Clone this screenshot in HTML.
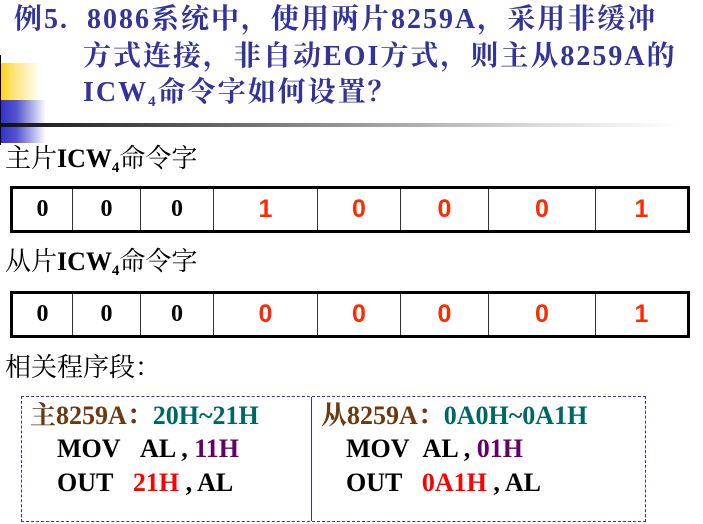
<!DOCTYPE html>
<html><head><meta charset="utf-8"><style>
body{margin:0;width:703px;height:524px;background:#fff;position:relative;overflow:hidden;font-family:"Liberation Serif","Noto Serif CJK SC",serif}
.a{position:absolute;white-space:nowrap}
.t{color:#333399;font-weight:bold;font-size:28px;line-height:30px;letter-spacing:2px}
.h{font-size:26px;color:#000;line-height:28px}
.h b{font-family:"Liberation Serif",serif}
table{position:absolute;left:10px;width:680px;border-collapse:collapse;border:3px solid #000;height:47px;table-layout:fixed}
td{border:1px solid #333;text-align:center;font-size:24px;font-weight:bold;padding:0}
td.r{color:#ff2a00;font-family:"Liberation Sans",sans-serif;font-size:25px}
.c{font-size:26px;font-weight:bold;line-height:28px}
sub{font-size:15px;vertical-align:-5px;line-height:0}
</style></head><body>
<div class="a" style="left:0;top:55px;width:1px;height:90px;background:#000"></div>
<div class="a" style="left:1px;top:63px;width:40px;height:37px;background:linear-gradient(90deg,#ffd21a,#ffe680 35%,#fff)"></div>
<div class="a" style="left:1px;top:100px;width:45px;height:43px;background:linear-gradient(90deg,#3333cc,#5555d0 35%,#fff)"></div>
<div class="a" style="left:0;top:123px;width:680px;height:4px;background:linear-gradient(90deg,#111,#888 45%,#ddd 80%,#fff)"></div>
<div class="a t" style="left:14px;top:5px">例5.&nbsp;&nbsp;8086系统中，使用两片8259A，采用非缓冲</div>
<div class="a t" style="left:83px;top:42px">方式连接，非自动EOI方式，则主从8259A的</div>
<div class="a t" style="left:83px;top:78px">ICW<sub>4</sub>命令字如何设置？</div>
<div class="a h" style="left:5px;top:145px">主片<b>ICW<sub>4</sub></b>命令字</div>
<table style="top:186px"><colgroup><col style="width:61px"><col style="width:68px"><col style="width:73px"><col style="width:104px"><col style="width:83px"><col style="width:88px"><col style="width:107px"><col></colgroup><tr>
<td>0</td><td>0</td><td>0</td><td class="r">1</td><td class="r">0</td><td class="r">0</td><td class="r">0</td><td class="r">1</td></tr></table>
<div class="a h" style="left:5px;top:248px">从片<b>ICW<sub>4</sub></b>命令字</div>
<table style="top:291px"><colgroup><col style="width:61px"><col style="width:68px"><col style="width:73px"><col style="width:104px"><col style="width:83px"><col style="width:88px"><col style="width:107px"><col></colgroup><tr>
<td>0</td><td>0</td><td>0</td><td class="r">0</td><td class="r">0</td><td class="r">0</td><td class="r">0</td><td class="r">1</td></tr></table>
<div class="a h" style="left:5px;top:354px">相关程序段：</div>
<div class="a" style="left:21px;top:396px;width:623px;height:124px;border:1px dashed #3333aa"></div>
<div class="a" style="left:311px;top:397px;width:1px;height:124px;background:#3333aa"></div>
<div class="a c" style="left:30px;top:402px"><span style="color:#6b3a10">主8259A：</span><span style="color:#006666">20H~21H</span></div>
<div class="a c" style="left:57px;top:435px">MOV&nbsp;&nbsp;&nbsp;AL , <span style="color:#660066">11H</span></div>
<div class="a c" style="left:57px;top:469px">OUT&nbsp;&nbsp;&nbsp;<span style="color:#ff0000">21H</span> , AL</div>
<div class="a c" style="left:321px;top:402px"><span style="color:#6b3a10">从8259A：</span><span style="color:#006666">0A0H~0A1H</span></div>
<div class="a c" style="left:346px;top:435px">MOV&nbsp;&nbsp;AL , <span style="color:#660066">01H</span></div>
<div class="a c" style="left:346px;top:469px">OUT&nbsp;&nbsp;&nbsp;<span style="color:#ff0000">0A1H</span> , AL</div>
</body></html>
